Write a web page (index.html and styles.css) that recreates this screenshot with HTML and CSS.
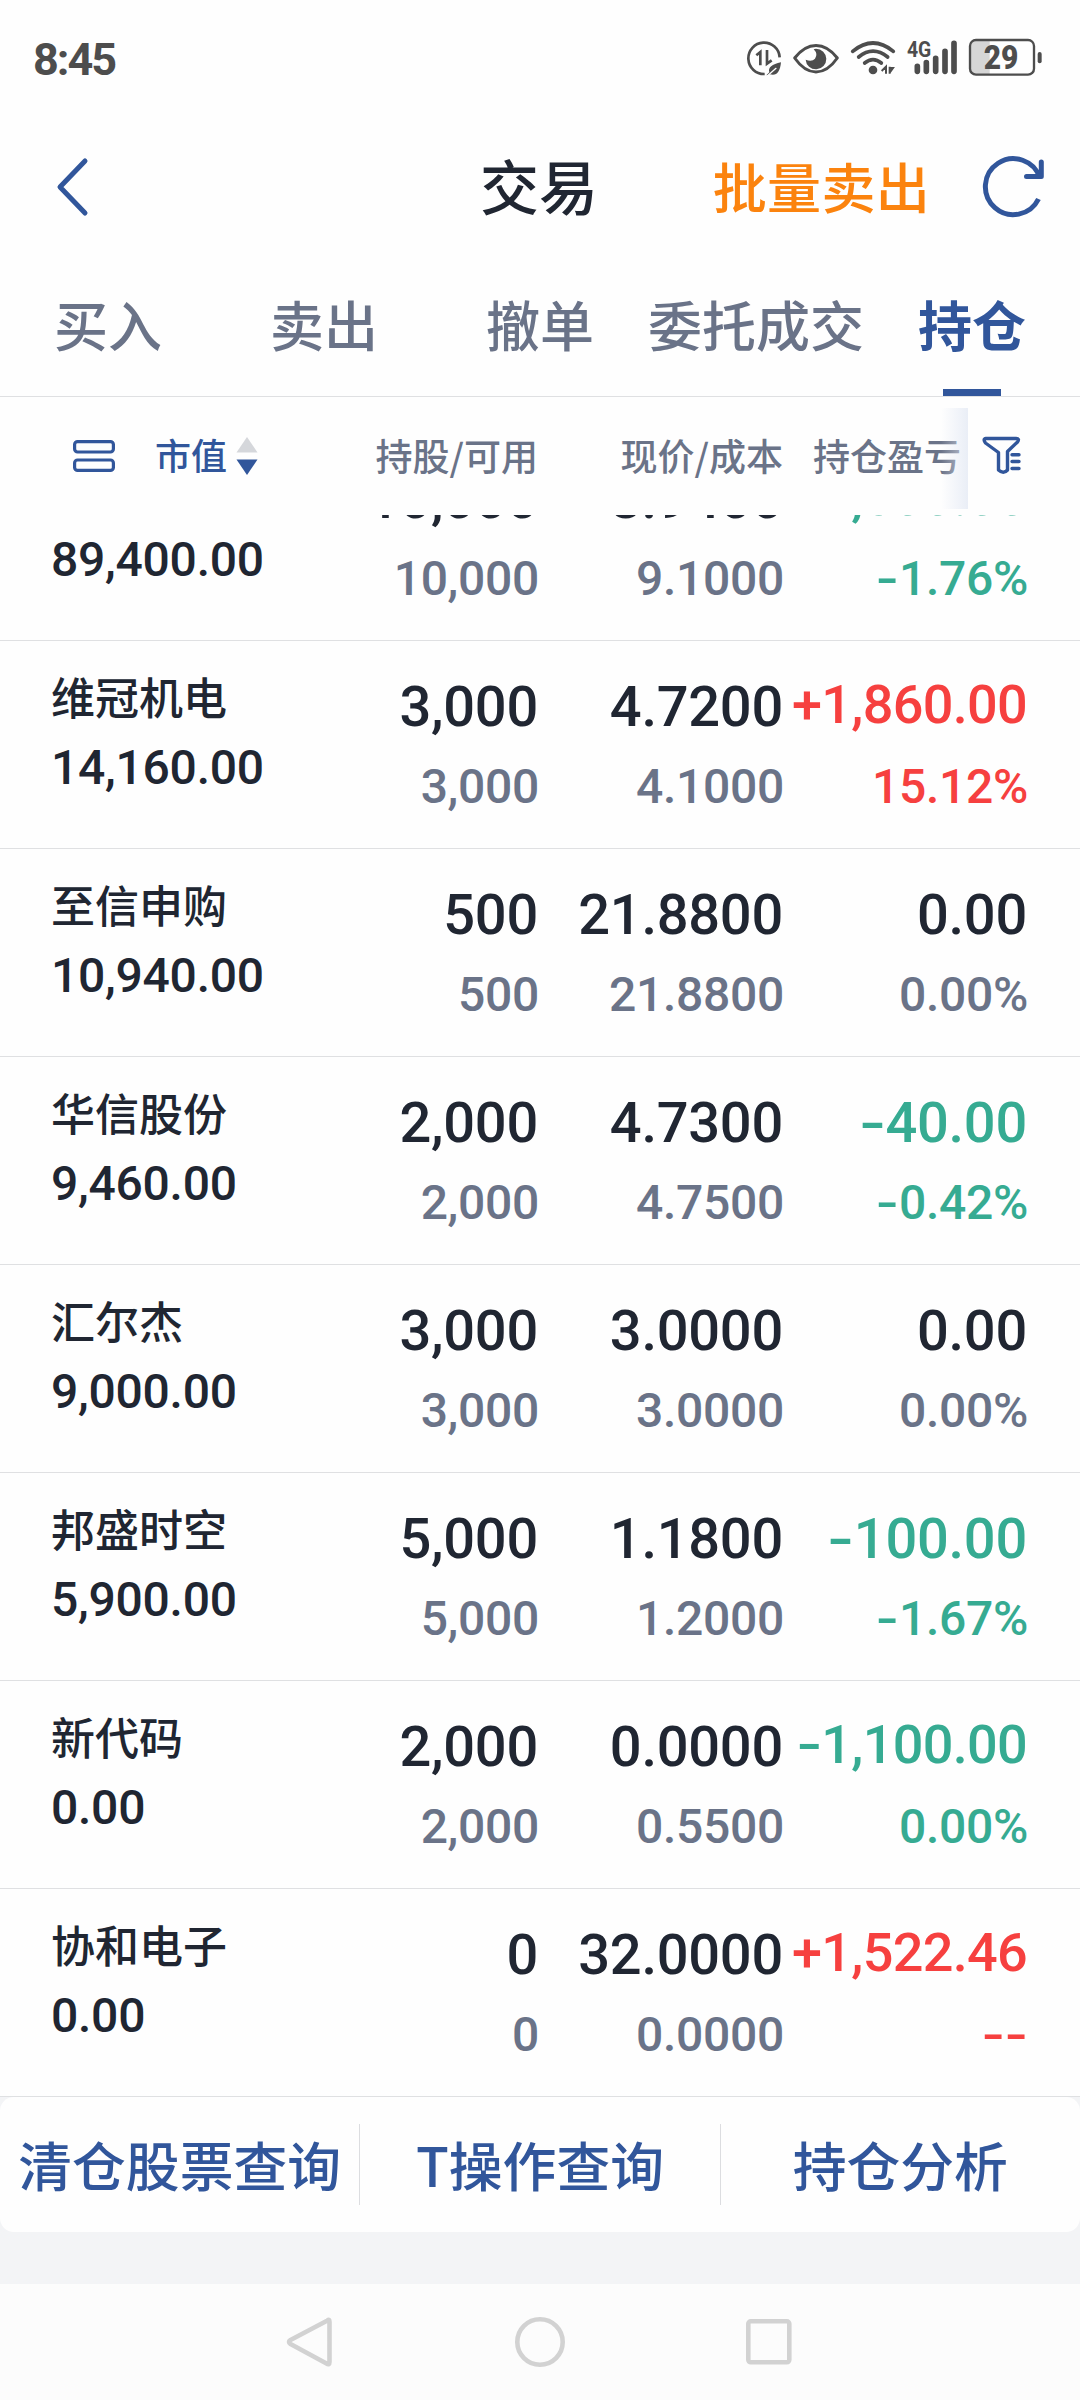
FILE: index.html
```html
<!DOCTYPE html>
<html lang="zh-CN">
<head>
    <meta charset="UTF-8">
    <meta name="viewport" content="width=device-width, initial-scale=1.0">
    <title>交易 - 持仓</title>
    <link rel="stylesheet" href="styles.css">
</head>
<body>

<div class="status-bar">
    <div class="time">8:45</div>
    <svg class="status-icons" width="360" height="80" viewBox="0 0 1080 240" fill="none" stroke="#4d4d4d" stroke-linecap="round">
        <!-- data saver -->
        <path d="M179 112 A47 47 0 1 0 134 162" stroke-width="8" stroke-linecap="butt"/>
        <path d="M109 106 L121 96 V136 M141 90 V131 L155 121" stroke-width="8" stroke-linecap="butt"/>
        <path d="M183 127 C156 133 143 143 148 157 L139 166 L149 163 C170 169 180 157 183 127 Z" fill="#4d4d4d" stroke="none"/>
        <path d="M146 164 L168 145" stroke="#fff" stroke-width="4"/>
        <!-- eye -->
        <path d="M224 114 C263 64 313 64 352 114 C313 170 263 170 224 114 Z" stroke-width="9" stroke-linejoin="round"/>
        <path d="M288 86 A31 31 0 1 1 257 119 Q276 126 285 116 Q295 102 281 88 Z" fill="#4d4d4d" stroke="none"/>
        <!-- wifi -->
        <path d="M398 94 Q459 44 520 94 M416 111 Q459 76 503 111 M434 129 Q459 109 484 129" stroke-width="11"/>
        <circle cx="459" cy="150" r="13" fill="#4d4d4d" stroke="none"/>
        <path d="M485 153 L498 140 V161 M509 161 V140 M509 144 H519 L509 158" stroke-width="6" stroke-linecap="butt"/>
        <!-- signal -->
        <path d="M592 139 V154 M619 128 V154 M647 115 V154 M675 94 V154 M702 70 V154" stroke-width="17"/>
        <text class="net" x="561" y="110" textLength="73" lengthAdjust="spacingAndGlyphs">4G</text>
        <!-- battery -->
        <path d="M809 62 H768 Q752 62 752 78 V146 Q752 162 768 162 H809 Z" fill="#d6d6d6" stroke="none"/>
        <rect x="750" y="60" width="192" height="104" rx="18" stroke-width="7"/>
        <path d="M959 102 V124" stroke-width="12"/>
        <text class="level" x="791" y="147" textLength="104" lengthAdjust="spacingAndGlyphs">29</text>
    </svg>
</div>

<div class="header">
    <svg class="back" width="36" height="64" viewBox="0 0 36 64" fill="none" stroke="#31569b" stroke-width="5" stroke-linecap="round" stroke-linejoin="round">
        <path d="M29 6 L4 32 L29 58"/>
    </svg>
    <div class="title">交易</div>
    <div class="header-right">
        <span class="batch-sell">批量卖出</span>
        <svg width="64" height="64" viewBox="0 0 64 64" fill="none" stroke="#31569b" stroke-width="5">
            <path d="M56.5 44 A28 28 0 1 1 58 23"/>
            <path d="M59.3 7 V21.5 H44.5" stroke-linecap="round" stroke-linejoin="round"/>
        </svg>
    </div>
</div>

<div class="tabs">
    <div class="tab">买入</div>
    <div class="tab">卖出</div>
    <div class="tab">撤单</div>
    <div class="tab">委托成交</div>
    <div class="tab active">持仓</div>
</div>

<div class="table-head">
    <div class="sort">
        <svg width="42" height="32" viewBox="0 0 42 32" fill="none" stroke="#31569b" stroke-width="3.2">
            <rect x="1.6" y="1.6" width="38.8" height="10.4" rx="3"/>
            <rect x="1.6" y="20" width="38.8" height="10.4" rx="3"/>
        </svg>
        <span class="sort-name">市值</span>
        <svg width="22" height="38" viewBox="0 0 22 38">
            <path d="M11 0 L21.5 15.5 H0.5 Z" fill="#d5d7db"/>
            <path d="M11 38 L21.5 22.5 H0.5 Z" fill="#31569b"/>
        </svg>
    </div>
    <div class="col">持股/可用</div>
    <div class="col">现价/成本</div>
    <div class="col">持仓盈亏</div>
    <div class="filter">
        <svg width="40" height="40" viewBox="0 0 40 40" fill="none" stroke="#31569b" stroke-width="3.4" stroke-linejoin="round" stroke-linecap="round">
            <path d="M4 2.5 H34 Q38 2.5 35.5 6 L25.5 15.5 V34 Q21.5 38.5 16.5 34 V16.5 L3.5 7 Q0.5 3 4 2.5 Z"/>
            <path d="M30 18.7 H37 M30 25.5 H37 M30 32.5 H37"/>
        </svg>
    </div>
</div>

<div class="list">
    <div class="row first">
        <div class="stock"><p class="name">&nbsp;</p><p class="value">89,400.00</p></div>
        <div class="num"><p class="big">10,000</p><p class="small">10,000</p></div>
        <div class="num"><p class="big">8.9400</p><p class="small">9.1000</p></div>
        <div class="num green"><p class="big long"><i>-</i>1,600.00</p><p class="small"><i>-</i>1.76%</p></div>
    </div>
    <div class="row">
        <div class="stock"><p class="name">维冠机电</p><p class="value">14,160.00</p></div>
        <div class="num"><p class="big">3,000</p><p class="small">3,000</p></div>
        <div class="num"><p class="big">4.7200</p><p class="small">4.1000</p></div>
        <div class="num red"><p class="big long">+1,860.00</p><p class="small">15.12%</p></div>
    </div>
    <div class="row">
        <div class="stock"><p class="name">至信申购</p><p class="value">10,940.00</p></div>
        <div class="num"><p class="big">500</p><p class="small">500</p></div>
        <div class="num"><p class="big">21.8800</p><p class="small">21.8800</p></div>
        <div class="num"><p class="big">0.00</p><p class="small">0.00%</p></div>
    </div>
    <div class="row">
        <div class="stock"><p class="name">华信股份</p><p class="value">9,460.00</p></div>
        <div class="num"><p class="big">2,000</p><p class="small">2,000</p></div>
        <div class="num"><p class="big">4.7300</p><p class="small">4.7500</p></div>
        <div class="num green"><p class="big"><i>-</i>40.00</p><p class="small"><i>-</i>0.42%</p></div>
    </div>
    <div class="row">
        <div class="stock"><p class="name">汇尔杰</p><p class="value">9,000.00</p></div>
        <div class="num"><p class="big">3,000</p><p class="small">3,000</p></div>
        <div class="num"><p class="big">3.0000</p><p class="small">3.0000</p></div>
        <div class="num"><p class="big">0.00</p><p class="small">0.00%</p></div>
    </div>
    <div class="row">
        <div class="stock"><p class="name">邦盛时空</p><p class="value">5,900.00</p></div>
        <div class="num"><p class="big">5,000</p><p class="small">5,000</p></div>
        <div class="num"><p class="big">1.1800</p><p class="small">1.2000</p></div>
        <div class="num green"><p class="big"><i>-</i>100.00</p><p class="small"><i>-</i>1.67%</p></div>
    </div>
    <div class="row">
        <div class="stock"><p class="name">新代码</p><p class="value">0.00</p></div>
        <div class="num"><p class="big">2,000</p><p class="small">2,000</p></div>
        <div class="num"><p class="big">0.0000</p><p class="small">0.5500</p></div>
        <div class="num green"><p class="big long"><i>-</i>1,100.00</p><p class="small">0.00%</p></div>
    </div>
    <div class="row">
        <div class="stock"><p class="name">协和电子</p><p class="value">0.00</p></div>
        <div class="num"><p class="big">0</p><p class="small">0</p></div>
        <div class="num"><p class="big">32.0000</p><p class="small">0.0000</p></div>
        <div class="num red"><p class="big long">+1,522.46</p><p class="small"><i>-</i><i>-</i></p></div>
    </div>
</div>

<div class="bottom">
    <div class="actions">
        <div class="action">清仓股票查询</div>
        <div class="action">T操作查询</div>
        <div class="action">持仓分析</div>
    </div>
</div>

<div class="nav-bar">
    <svg width="52" height="52" viewBox="0 0 52 52" fill="none" stroke="#d2d2d2" stroke-width="4.6" stroke-linejoin="round">
        <path d="M43.5 4.5 Q45.5 2.5 45.5 6 V46 Q45.5 49.5 42.5 47.5 L6.5 28 Q3.5 26 6.5 24 Z"/>
    </svg>
    <svg width="52" height="52" viewBox="0 0 52 52" fill="none" stroke="#d2d2d2" stroke-width="4.6">
        <circle cx="26" cy="26" r="22.7"/>
    </svg>
    <svg width="52" height="52" viewBox="0 0 52 52" fill="none" stroke="#d2d2d2" stroke-width="4.6">
        <rect x="4.3" y="5.3" width="41" height="41" rx="2.5"/>
    </svg>
</div>

</body>
</html>
```
FILE: styles.css
```css
body {
    margin: 0;
    width: 1080px;
    height: 2400px;
    overflow: hidden;
    background: #fefefe;
    color: #202632;
    font-family: "Noto Sans CJK SC", sans-serif;
    font-weight: 500;
    display: flex;
    flex-direction: column;
}

p {
    margin: 0;
}

/* status bar */
.status-bar {
    height: 120px;
    display: flex;
    justify-content: space-between;
    align-items: center;
    color: #4d4d4d;
}

.time {
    padding-left: 33px;
    font: bold 45px/54px Roboto, sans-serif;
    letter-spacing: -2px;
}

.status-icons text {
    fill: #4d4d4d;
    stroke: none;
    font-family: Roboto, sans-serif;
    font-weight: bold;
}

.net {
    font-size: 66px;
}

.status-icons .level {
    font-size: 99px;
    font-weight: 900;
}

/* header */
.header {
    height: 134px;
    display: grid;
    grid-template-columns: 1fr 200px 1fr;
    align-items: center;
}

.back {
    margin-left: 56px;
}

.title {
    font-size: 59px;
    line-height: 70px;
    text-align: center;
    margin: -4px 2px 0 0;
}

.header-right {
    display: flex;
    justify-content: flex-end;
    align-items: center;
    gap: 52px;
    padding-right: 34px;
}

.batch-sell {
    color: #fb830e;
    font-size: 54px;
    line-height: 64px;
    letter-spacing: 0.3px;
    margin-top: -3px;
}

/* tabs */
.tabs {
    height: 142px;
    display: flex;
    border-bottom: 1px solid #dfe0e2;
}

.tab {
    position: relative;
    flex: 1;
    padding-top: 28px;
    box-sizing: border-box;
    text-align: center;
    font-size: 54px;
    line-height: 84px;
    white-space: nowrap;
    color: #6a7388;
}

.tab.active {
    color: #31569b;
    font-weight: bold;
}

.tab.active::after {
    content: "";
    position: absolute;
    left: 79px;
    bottom: 0;
    width: 58px;
    height: 7px;
    background: #31569b;
}

/* table */
.table-head {
    height: 118px;
    flex: none;
    display: grid;
    grid-template-columns: 294px 244px 245px 178px 119px;
    align-items: center;
    color: #6a7388;
    font-size: 37px;
    line-height: 50px;
}

.col {
    text-align: right;
    white-space: nowrap;
    margin-top: -3px;
}

.sort {
    display: flex;
    align-items: center;
    padding-left: 73px;
}

.sort-name {
    margin: -4px 9px 0 40px;
    font-size: 36px;
    color: #31569b;
}

.filter {
    position: relative;
    height: 101px;
    display: flex;
    align-items: center;
    padding-left: 21px;
}

/* shade at the scroll edge */
.filter::before {
    content: "";
    position: absolute;
    left: -20px;
    top: 2px;
    width: 27px;
    height: 101px;
    background: linear-gradient(to right, rgba(225, 231, 243, 0), rgba(225, 231, 243, 0.7));
}

.list {
    height: 1582px;
    flex: none;
    overflow: hidden;
}

.row {
    height: 208px;
    box-sizing: border-box;
    border-bottom: 1px solid #dfe0e2;
    display: grid;
    grid-template-columns: 294px 244px 245px 244px;
}

.row.first {
    margin-top: -82px;
}

.stock {
    padding: 27px 0 0 51px;
}

.name {
    font-size: 44px;
    line-height: 56px;
    margin-bottom: 14px;
}

.value {
    font-family: Roboto, sans-serif;
    font-size: 48px;
    line-height: 60px;
    letter-spacing: -0.25px;
}

.num {
    padding-top: 34px;
    font-family: Roboto, sans-serif;
    text-align: right;
    white-space: nowrap;
}

.big {
    font-size: 56px;
    line-height: 64px;
    margin-bottom: 18px;
    letter-spacing: -0.25px;
}

.big.long {
    font-size: 54px;
    line-height: 60px;
    margin-bottom: 22px;
    letter-spacing: -0.7px;
}

.small {
    font-size: 48px;
    line-height: 60px;
    letter-spacing: -0.3px;
    margin-right: -1px;
    color: #6a7388;
}

.num i {
    display: inline-block;
    font-style: normal;
    transform: scaleX(1.35);
    margin: 0 4px 0 3px;
}

.red, .red .small {
    color: #f6403f;
}

.green, .green .small {
    color: #36ab92;
}

/* bottom buttons */
.bottom {
    height: 187px;
    flex: none;
    background: #f3f4f6;
}

.actions {
    height: 135px;
    display: flex;
    align-items: center;
    background: #fefefe;
    border-radius: 14px;
}

.action {
    flex: 1;
    height: 81px;
    box-sizing: border-box;
    border-right: 1px solid #dcdde0;
    text-align: center;
    color: #31569b;
    font-size: 53.8px;
    line-height: 79px;
    white-space: nowrap;
}

.action:last-child {
    border-right: none;
}

.nav-bar {
    height: 116px;
    flex: none;
    display: flex;
    justify-content: center;
    align-items: center;
    gap: 178px;
    background: #fcfcfc;
}
```
